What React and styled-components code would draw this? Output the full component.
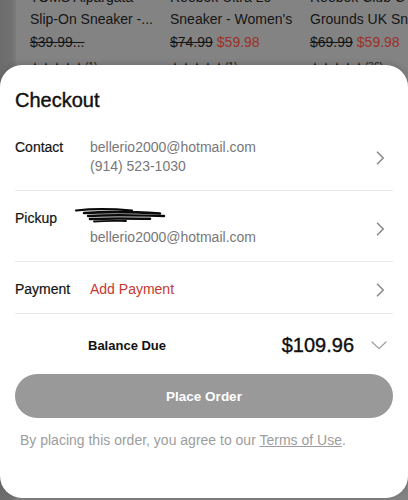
import React from 'react';
import styled, { createGlobalStyle } from 'styled-components';

const GlobalStyle = createGlobalStyle`
  html, body {
    margin: 0;
    padding: 0;
    background: #7f7f7f;
  }
  body {
    font-family: "Liberation Sans", Arial, Helvetica, sans-serif;
    -webkit-font-smoothing: antialiased;
  }
`;

const Screen = styled.div`
  position: relative;
  width: 408px;
  height: 500px;
  overflow: hidden;
  background: #838383;
`;

const Backdrop = styled.div`
  display: flex;
  height: 100%;
`;

const EdgeShade = styled.div`
  width: 16px;
  flex-shrink: 0;
  background: linear-gradient(to right, #6c6c6c 0%, #717171 70%, #7b7b7b 100%);
`;

const ProductGrid = styled.div`
  display: grid;
  grid-template-columns: 140px 140px 140px;
  padding-left: 14px;
  margin-top: -14px;
`;

const Product = styled.div`
  display: flex;
  flex-direction: column;
  color: #151515;
  font-size: 14px;
  line-height: 22px;
  white-space: nowrap;
`;

const ProductName = styled.div``;

const PriceLine = styled.div`
  display: flex;
  gap: 4px;
  margin-top: 1px;
`;

const OldPrice = styled.span`
  text-decoration: line-through;
`;

const SalePrice = styled.span`
  color: #9c3128;
`;

const Stars = styled.div`
  margin-top: 2px;
  font-size: 11px;
  letter-spacing: 1px;
  color: #1a1a1a;
  span {
    font-size: 10px;
    letter-spacing: 0;
  }
`;

const Sheet = styled.section`
  position: absolute;
  top: 65px;
  left: 0;
  width: 408px;
  height: 433px;
  box-sizing: border-box;
  padding: 23px 15px 0 15px;
  background: #ffffff;
  border-radius: 22px;
  box-shadow: 0 -1px 6px rgba(0, 0, 0, 0.18);
`;

const Title = styled.h1`
  margin: 0 0 8px 0;
  font-size: 20px;
  line-height: 24px;
  font-weight: 400;
  color: #111111;
  -webkit-text-stroke: 0.4px #111111;
`;

const Row = styled.div`
  display: grid;
  grid-template-columns: 75px 1fr auto;
  align-items: center;
  padding: 18px 0 14px 0;
  border-top: ${({ divided }) => (divided ? '1px solid #e9e9e9' : 'none')};
`;

const Label = styled.div`
  align-self: start;
  font-size: 14px;
  line-height: 19px;
  color: #141414;
  -webkit-text-stroke: 0.2px #141414;
`;

const Values = styled.div`
  display: flex;
  flex-direction: column;
  font-size: 14px;
  line-height: 19px;
  color: ${({ accent }) => (accent ? '#c7382c' : '#787878')};
`;

const Redacted = styled.svg`
  display: block;
  margin: -3px 0 3px -16px;
  width: 96px;
  height: 19px;
`;

const Chevron = styled.svg`
  width: 9px;
  height: 14px;
  margin-right: 8px;
  margin-top: ${({ offset }) => offset || 0}px;
`;

const BalanceRow = styled.div`
  display: flex;
  align-items: center;
  height: 61px;
  padding-top: 3px;
  box-sizing: border-box;
  border-top: 1px solid #e9e9e9;
`;

const BalanceLabel = styled.div`
  margin-left: 73px;
  font-size: 13px;
  font-weight: 700;
  color: #111111;
`;

const Amount = styled.div`
  margin-left: auto;
  font-size: 20px;
  color: #0f0f0f;
  -webkit-text-stroke: 0.35px #0f0f0f;
`;

const ChevronDown = styled.svg`
  width: 16px;
  height: 9px;
  margin: 0 6px 0 17px;
`;

const PlaceOrder = styled.button`
  display: block;
  width: 100%;
  height: 44px;
  border: none;
  border-radius: 22px;
  background: #999999;
  color: #ffffff;
  font-family: inherit;
  font-size: 13.5px;
  font-weight: 700;
  cursor: default;
`;

const Disclaimer = styled.p`
  margin: 12px 0 0 5px;
  font-size: 14px;
  line-height: 20px;
  color: #9d9d9d;
  white-space: nowrap;
`;

const TermsLink = styled.span`
  text-decoration: underline;
`;

const ChevronRight = ({ offset }) => (
  <Chevron viewBox="0 0 9 14" offset={offset}>
    <path d="M1.5 1.2 L7.3 7 L1.5 12.8" fill="none" stroke="#8a8a8a" strokeWidth="1.6" strokeLinecap="round" strokeLinejoin="round" />
  </Chevron>
);

const products = [
  { top: 'TOMS Alpargata', name: 'Slip-On Sneaker -...', old: '$39.99...', sale: null, count: '(1)' },
  { top: 'Reebok Ultra Lo', name: 'Sneaker - Women\'s', old: '$74.99', sale: '$59.98', count: '(1)' },
  { top: 'Reebok Club C', name: 'Grounds UK Sneaker', old: '$69.99', sale: '$59.98', count: '(36)' },
];

export default function App() {
  return (
    <>
      <GlobalStyle />
      <Screen>
        <Backdrop>
          <EdgeShade />
          <ProductGrid>
            {products.map((p) => (
              <Product key={p.name}>
                <ProductName>{p.top}</ProductName>
                <ProductName>{p.name}</ProductName>
                <PriceLine>
                  <OldPrice>{p.old}</OldPrice>
                  {p.sale && <SalePrice>{p.sale}</SalePrice>}
                </PriceLine>
                <Stars>
                  ★★★★★<span>{p.count}</span>
                </Stars>
              </Product>
            ))}
          </ProductGrid>
        </Backdrop>

        <Sheet>
          <Title>Checkout</Title>

          <Row>
            <Label>Contact</Label>
            <Values>
              <span>bellerio2000@hotmail.com</span>
              <span>(914) 523-1030</span>
            </Values>
            <ChevronRight offset={2} />
          </Row>

          <Row divided>
            <Label>Pickup</Label>
            <Values>
              <Redacted viewBox="0 0 96 19">
                <g fill="none" stroke="#0a0a0a" strokeLinecap="round">
                  <path d="M2 4.5 C20 2.5 40 3 58 4.5" strokeWidth="2.2" />
                  <path d="M10 7 C35 5.5 60 6 86 7.5" strokeWidth="2.6" />
                  <path d="M14 10 C40 8.5 62 9.5 90 10" strokeWidth="2.4" />
                  <path d="M16 13 C38 12 56 12.5 76 12.8" strokeWidth="2.6" />
                  <path d="M20 15.5 C34 14.5 44 15 52 15" strokeWidth="1.8" />
                </g>
              </Redacted>
              <span>bellerio2000@hotmail.com</span>
            </Values>
            <ChevronRight offset={2} />
          </Row>

          <Row divided>
            <Label>Payment</Label>
            <Values accent>
              <span>Add Payment</span>
            </Values>
            <ChevronRight />
          </Row>

          <BalanceRow>
            <BalanceLabel>Balance Due</BalanceLabel>
            <Amount>$109.96</Amount>
            <ChevronDown viewBox="0 0 16 9">
              <path d="M1 1 L8 7.6 L15 1" fill="none" stroke="#9a9a9a" strokeWidth="1.2" strokeLinecap="round" strokeLinejoin="round" />
            </ChevronDown>
          </BalanceRow>

          <PlaceOrder type="button">Place Order</PlaceOrder>

          <Disclaimer>
            By placing this order, you agree to our <TermsLink>Terms of Use</TermsLink>.
          </Disclaimer>
        </Sheet>
      </Screen>
    </>
  );
}
